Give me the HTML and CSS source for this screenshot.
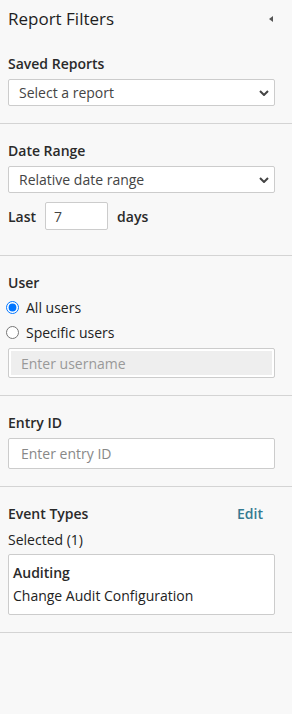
FILE: index.html
```html
<!DOCTYPE html>
<html lang="en">
<head>
    <meta charset="UTF-8">
    <meta name="viewport" content="width=device-width, initial-scale=1.0">
    <link rel="stylesheet" href="styles.css">
    <title>Report Filters</title>
</head>
<body>
    <div class="panel">
        <div class="panel-header">
            <h2>Report Filters</h2>
            <span class="collapse"></span>
        </div>

        <div class="section first">
            <label class="field-label" for="saved">Saved Reports</label>
            <select id="saved" class="control">
                <option>Select a report</option>
            </select>
        </div>

        <div class="section">
            <label class="field-label" for="range">Date Range</label>
            <select id="range" class="control">
                <option>Relative date range</option>
            </select>
            <div class="last-row">
                <span>Last</span>
                <input type="text" class="days-input" value="7">
                <span>days</span>
            </div>
        </div>

        <div class="section">
            <div class="field-label tight">User</div>
            <div class="radio-row">
                <input type="radio" id="allUsers" name="user" checked>
                <label for="allUsers">All users</label>
            </div>
            <div class="radio-row">
                <input type="radio" id="specUsers" name="user">
                <label for="specUsers">Specific users</label>
            </div>
            <input type="text" class="control text-input disabled" placeholder="Enter username" disabled>
        </div>

        <div class="section">
            <label class="field-label" for="entry">Entry ID</label>
            <input type="text" id="entry" class="control text-input" placeholder="Enter entry ID">
        </div>

        <div class="section">
            <div class="events-head">
                <span class="field-label">Event Types</span>
                <a href="#" class="edit-link">Edit</a>
            </div>
            <div class="selected-count">Selected (1)</div>
            <div class="event-box">
                <div class="event-group">Auditing</div>
                <div class="event-item">Change Audit Configuration</div>
            </div>
        </div>
    </div>
</body>
</html>
```

FILE: styles.css
```css
body {
    margin: 0;
    font-family: 'Open Sans', 'Noto Sans', sans-serif;
    font-size: 14px;
    color: #222;
    background-color: #f8f8f8;
    height: 714px;
}

.panel {
    background-color: #f8f8f8;
}

.panel-header {
    display: flex;
    align-items: center;
    justify-content: space-between;
    padding: 4px 19px 0 8px;
    height: 28px;
}

.panel-header h2 {
    margin: 0;
    font-size: 17px;
    font-weight: 400;
    color: #1e1e1e;
}

.collapse {
    width: 0;
    height: 0;
    border-top: 3px solid transparent;
    border-bottom: 3px solid transparent;
    border-right: 4px solid #555;
    margin-top: 1px;
}

.section {
    padding: 17px 17px 17px 8px;
    border-bottom: 1px solid #d4d4d4;
}

.section.first {
    padding-top: 22px;
}

.field-label {
    display: block;
    font-weight: 600;
    font-size: 14px;
    color: #2a2a2a;
    margin-bottom: 6px;
    line-height: 19px;
}

.field-label.tight {
    margin-bottom: 3px;
}

.control {
    display: block;
    width: 100%;
    box-sizing: border-box;
    font-family: inherit;
    font-size: 14px;
    color: #444;
    background-color: #fff;
    border: 1px solid #ccc;
    border-radius: 2px;
}

select.control {
    height: 27px;
    padding: 0 8px 0 10px;
    appearance: none;
    background-image: url("data:image/svg+xml,%3Csvg xmlns='http://www.w3.org/2000/svg' width='10' height='6'%3E%3Cpath d='M1 1l4 4 4-4' fill='none' stroke='%23444' stroke-width='2'/%3E%3C/svg%3E");
    background-repeat: no-repeat;
    background-position: right 5px center;
}

.text-input {
    height: 31px;
    padding: 0 12px;
}

.text-input::placeholder {
    color: #888;
}

.text-input.disabled {
    height: 30px;
    background-color: #eee;
    box-shadow: inset 0 0 0 2px #fff;
    margin-top: 3px;
}

.text-input.disabled::placeholder {
    color: #999;
}

.last-row {
    display: flex;
    align-items: center;
    gap: 9px;
    margin-top: 9px;
    margin-bottom: 8px;
    font-weight: 600;
    color: #2a2a2a;
}

.days-input {
    width: 63px;
    height: 28px;
    box-sizing: border-box;
    border: 1px solid #ccc;
    border-radius: 2px;
    padding: 0 8px;
    font-family: inherit;
    font-size: 14px;
    color: #444;
}

.radio-row {
    display: flex;
    align-items: center;
    height: 25px;
    margin-left: -2px;
}

.radio-row input {
    margin: 0 7px 0 0;
    width: 13px;
    height: 13px;
}

.events-head {
    display: flex;
    justify-content: space-between;
    align-items: baseline;
}

.events-head .field-label {
    margin-bottom: 0;
}

.edit-link {
    color: #357a91;
    text-decoration: none;
    font-weight: 600;
    margin-right: 12px;
}

.selected-count {
    margin-top: 7px;
    line-height: 19px;
    margin-bottom: 5px;
}

.event-box {
    background-color: #fff;
    border: 1px solid #ccc;
    border-radius: 2px;
    padding: 7px 5px 6px 4px;
}

.event-group {
    font-weight: 600;
    color: #2a2a2a;
    line-height: 22px;
}

.event-item {
    line-height: 24px;
}
```
